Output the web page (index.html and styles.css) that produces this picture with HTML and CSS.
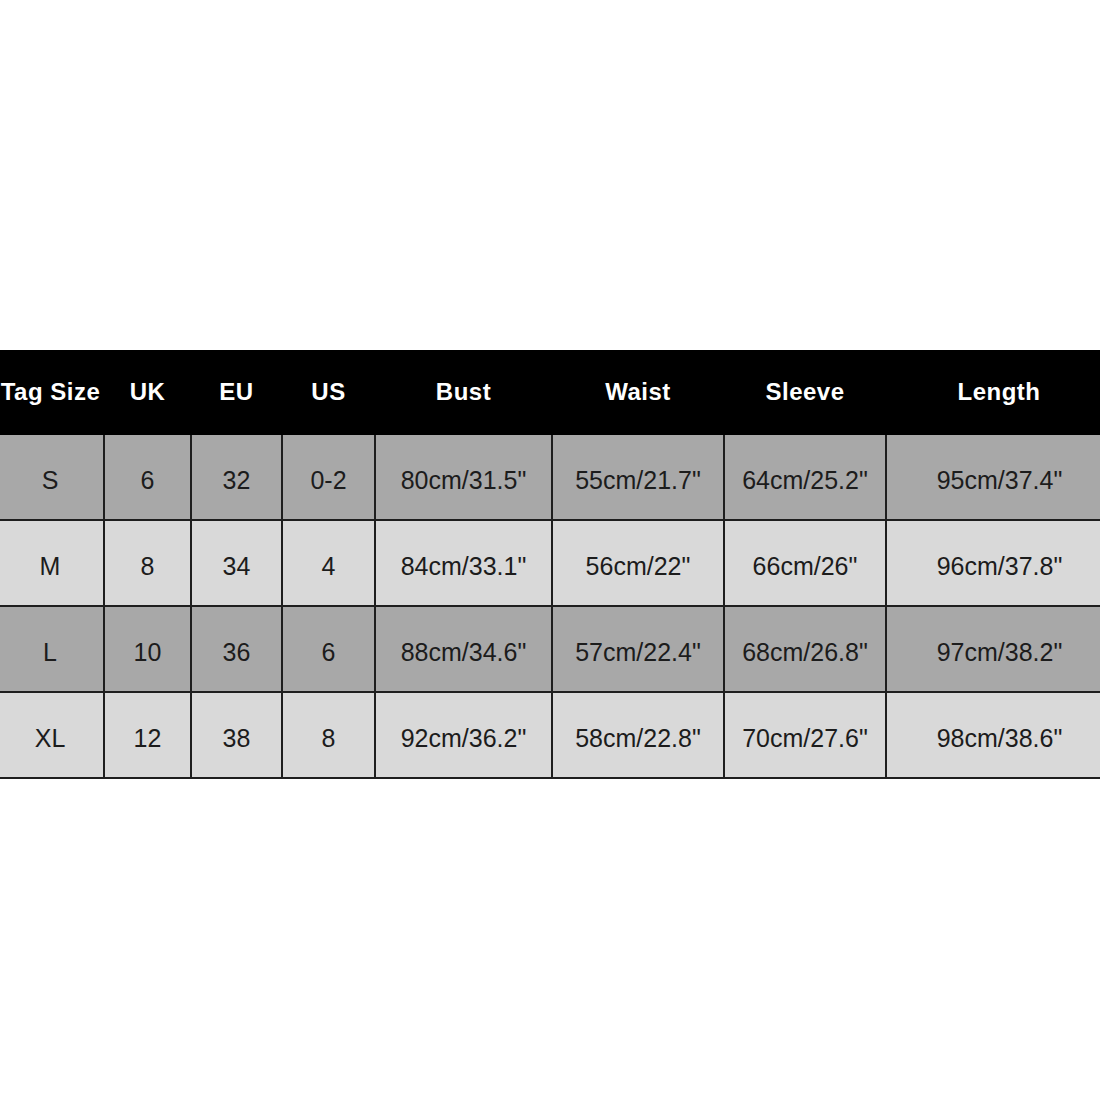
FILE: index.html
```html
<!DOCTYPE html>
<html>
<head>
<meta charset="utf-8">
<link rel="stylesheet" href="styles.css">
</head>
<body>
<div class="page">
  <table class="chart">
    <colgroup>
      <col class="c1"><col class="c2"><col class="c3"><col class="c4"><col class="c5"><col class="c6"><col class="c7"><col class="c8">
    </colgroup>
    <thead>
      <tr>
        <th>Tag Size</th><th>UK</th><th>EU</th><th>US</th><th>Bust</th><th>Waist</th><th>Sleeve</th><th>Length</th>
      </tr>
    </thead>
    <tbody>
      <tr class="dark">
        <td>S</td><td>6</td><td>32</td><td>0-2</td><td>80cm/31.5"</td><td>55cm/21.7"</td><td>64cm/25.2"</td><td>95cm/37.4"</td>
      </tr>
      <tr class="light">
        <td>M</td><td>8</td><td>34</td><td>4</td><td>84cm/33.1"</td><td>56cm/22"</td><td>66cm/26"</td><td>96cm/37.8"</td>
      </tr>
      <tr class="dark">
        <td>L</td><td>10</td><td>36</td><td>6</td><td>88cm/34.6"</td><td>57cm/22.4"</td><td>68cm/26.8"</td><td>97cm/38.2"</td>
      </tr>
      <tr class="light">
        <td>XL</td><td>12</td><td>38</td><td>8</td><td>92cm/36.2"</td><td>58cm/22.8"</td><td>70cm/27.6"</td><td>98cm/38.6"</td>
      </tr>
    </tbody>
  </table>
</div>
</body>
</html>
```
FILE: styles.css
```css
html, body {
  margin: 0;
  padding: 0;
  background: #ffffff;
}
.page {
  width: 1100px;
  height: 1100px;
  padding-top: 350px;
  box-sizing: border-box;
  overflow: hidden;
  font-family: "Liberation Sans", Arial, sans-serif;
}
.chart {
  width: 1115px;
  margin-left: -3px;
  table-layout: fixed;
  border-collapse: collapse;
  border-spacing: 0;
}
.c1 { width: 107px; }
.c2 { width: 87px; }
.c3 { width: 91px; }
.c4 { width: 93px; }
.c5 { width: 177px; }
.c6 { width: 172px; }
.c7 { width: 162px; }
.c8 { width: 226px; }
.chart th {
  background: #000000;
  color: #ffffff;
  font-weight: bold;
  font-size: 24px;
  letter-spacing: 0.5px;
  height: 84px;
  padding: 0 0 1px;
  text-align: center;
  vertical-align: middle;
  white-space: nowrap;
}
.chart td {
  height: 78px;
  padding: 6px 0 0;
  text-align: center;
  vertical-align: middle;
  font-size: 25px;
  color: #1c1c1c;
  border-left: 2px solid #1e1e1e;
  border-bottom: 2px solid #1e1e1e;
  white-space: nowrap;
}
.chart td:first-child {
  border-left: none;
}
.dark td {
  background: #a8a8a8;
}
.light td {
  background: #d9d9d9;
}
```
